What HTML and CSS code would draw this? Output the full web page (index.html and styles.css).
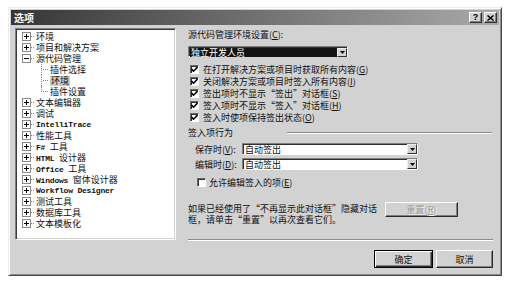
FILE: index.html
```html
<!DOCTYPE html>
<html lang="zh">
<head>
<meta charset="utf-8">
<title>选项</title>
<link rel="stylesheet" href="styles.css">
</head>
<body>
<div class="window">
  <div class="titlebar">
    <span class="title">选项</span>
    <div class="tbtns">
      <span class="tbtn">?</span>
      <span class="tbtn"><svg width="7" height="6" viewBox="0 0 7 6"><path d="M0.5 0.5L6.5 5.5M6.5 0.5L0.5 5.5" stroke="#000" stroke-width="1.5"/></svg></span>
    </div>
  </div>
  <div class="main">
    <div class="tree">
      <div class="node"><i class="exp plus"></i><b class="dash"></b><span class="t">环境</span></div>
      <div class="node"><i class="exp plus"></i><b class="dash"></b><span class="t">项目和解决方案</span></div>
      <div class="node"><i class="exp"></i><b class="dash"></b><span class="t">源代码管理</span></div>
      <div class="node child"><b class="conn"></b><span class="t">插件选择</span></div>
      <div class="node child"><b class="conn"></b><span class="t sel">环境</span></div>
      <div class="node child"><b class="conn last"></b><span class="t">插件设置</span></div>
      <div class="node"><i class="exp plus"></i><b class="dash"></b><span class="t">文本编辑器</span></div>
      <div class="node"><i class="exp plus"></i><b class="dash"></b><span class="t">调试</span></div>
      <div class="node"><i class="exp plus"></i><b class="dash"></b><span class="t lat">IntelliTrace</span></div>
      <div class="node"><i class="exp plus"></i><b class="dash"></b><span class="t">性能工具</span></div>
      <div class="node"><i class="exp plus"></i><b class="dash"></b><span class="t"><span class="lat">F# </span>工具</span></div>
      <div class="node"><i class="exp plus"></i><b class="dash"></b><span class="t"><span class="lat">HTML </span>设计器</span></div>
      <div class="node"><i class="exp plus"></i><b class="dash"></b><span class="t"><span class="lat">Office </span>工具</span></div>
      <div class="node"><i class="exp plus"></i><b class="dash"></b><span class="t"><span class="lat">Windows </span>窗体设计器</span></div>
      <div class="node"><i class="exp plus"></i><b class="dash"></b><span class="t lat">Workflow Designer</span></div>
      <div class="node"><i class="exp plus"></i><b class="dash"></b><span class="t">测试工具</span></div>
      <div class="node"><i class="exp plus"></i><b class="dash"></b><span class="t">数据库工具</span></div>
      <div class="node"><i class="exp plus"></i><b class="dash"></b><span class="t">文本模板化</span></div>
    </div>

    <div class="pane">
      <div class="label">源代码管理环境设置(<u>C</u>):</div>
      <div class="combo wide">
        <div class="field selected"><span class="ft">独立开发人员</span></div>
        <div class="arrow"><svg width="5" height="3" viewBox="0 0 5 3"><path d="M0 0H5L2.5 3Z" fill="#000"/></svg></div>
      </div>
      <div class="checks">
        <div class="chk"><span class="box"><svg width="7" height="7" viewBox="0 0 7 7"><path d="M0.5 3L2.5 5.2L6.5 1" stroke="#000" stroke-width="1.6" fill="none"/></svg></span><span class="ct">在打开解决方案或项目时获取所有内容(<u>G</u>)</span></div>
        <div class="chk"><span class="box"><svg width="7" height="7" viewBox="0 0 7 7"><path d="M0.5 3L2.5 5.2L6.5 1" stroke="#000" stroke-width="1.6" fill="none"/></svg></span><span class="ct">关闭解决方案或项目时签入所有内容(<u>I</u>)</span></div>
        <div class="chk"><span class="box"><svg width="7" height="7" viewBox="0 0 7 7"><path d="M0.5 3L2.5 5.2L6.5 1" stroke="#000" stroke-width="1.6" fill="none"/></svg></span><span class="ct">签出项时不显示“签出”对话框(<u>S</u>)</span></div>
        <div class="chk"><span class="box"><svg width="7" height="7" viewBox="0 0 7 7"><path d="M0.5 3L2.5 5.2L6.5 1" stroke="#000" stroke-width="1.6" fill="none"/></svg></span><span class="ct">签入项时不显示“签入”对话框(<u>H</u>)</span></div>
        <div class="chk"><span class="box"><svg width="7" height="7" viewBox="0 0 7 7"><path d="M0.5 3L2.5 5.2L6.5 1" stroke="#000" stroke-width="1.6" fill="none"/></svg></span><span class="ct">签入时使项保持签出状态(<u>O</u>)</span></div>
      </div>
      <div class="group">
        <span class="ct">签入项行为</span>
        <span class="gline"></span>
      </div>
      <div class="frow first">
        <span class="flabel">保存时(<u>V</u>):</span>
        <div class="combo mid">
          <div class="field"><span class="ft">自动签出</span></div>
          <div class="arrow"><svg width="5" height="3" viewBox="0 0 5 3"><path d="M0 0H5L2.5 3Z" fill="#000"/></svg></div>
        </div>
      </div>
      <div class="frow">
        <span class="flabel">编辑时(<u>D</u>):</span>
        <div class="combo mid">
          <div class="field"><span class="ft">自动签出</span></div>
          <div class="arrow"><svg width="5" height="3" viewBox="0 0 5 3"><path d="M0 0H5L2.5 3Z" fill="#000"/></svg></div>
        </div>
      </div>
      <div class="chk allow"><span class="box"></span><span class="ct">允许编辑签入的项(<u>E</u>)</span></div>
      <div class="reset-row">
        <p class="note">如果已经使用了“不再显示此对话框”隐藏对话框，请单击“重置”以再次查看它们。</p>
        <span class="btn disabled">重置(<u>R</u>)</span>
      </div>
      <div class="sep"></div>
      <div class="actions">
        <span class="btn default">确定</span>
        <span class="btn cancel">取消</span>
      </div>
    </div>
  </div>
</div>
</body>
</html>
```

FILE: styles.css
```css
* { box-sizing: border-box; }

body {
  margin: 0;
  background: #fff;
  font-family: "Noto Sans CJK SC", "Noto Sans", sans-serif;
  font-size: 9px;
  color: #111;
}

.window {
  margin: 7px 0 0 8px;
  width: 494px;
  height: 269px;
  background: #d2d2d2;
  border: 1px solid;
  border-color: #ececec #4a4a4a #4a4a4a #ececec;
  box-shadow: inset 1px 1px #fff, inset -1px -1px #8a8a8a;
  padding: 2px;
}

.titlebar {
  height: 15px;
  background: linear-gradient(to right, #363636, #5a5a5a 30%, #a9a9a9);
  display: flex;
  align-items: center;
  justify-content: space-between;
  padding: 0 2px 0 3px;
}

.title {
  color: #fff;
  font-weight: bold;
  font-size: 10px;
  line-height: 12px;
  height: 12px;
}

.tbtns { display: flex; gap: 2px; }

.tbtn {
  width: 13px;
  height: 11px;
  background: #d2d2d2;
  border: 1px solid;
  border-color: #fff #303030 #303030 #fff;
  box-shadow: inset -1px -1px #808080;
  display: flex;
  align-items: center;
  justify-content: center;
  font-family: "Liberation Sans", sans-serif;
  font-weight: bold;
  font-size: 9px;
  line-height: 9px;
  color: #000;
}

.main {
  display: flex;
  padding: 3px 0 0 4px;
}

.tree {
  width: 161px;
  height: 212px;
  background: #fff;
  border: 1px solid;
  border-color: #808080 #fff #fff #808080;
  box-shadow: inset 1px 1px #3a3a3a, inset -1px -1px #d2d2d2;
  padding: 2px 0 0 0;
}

.node {
  height: 11px;
  display: flex;
  align-items: center;
  padding-left: 6px;
  white-space: nowrap;
}

.t {
  display: inline-block;
  height: 10px;
  line-height: 10px;
}

.exp {
  width: 9px;
  height: 9px;
  border: 1px solid #8a8a8a;
  background: #fff;
  position: relative;
  flex: none;
}
.exp::before {
  content: "";
  position: absolute;
  left: 1px;
  top: 3px;
  width: 5px;
  height: 1px;
  background: #000;
}
.exp.plus::after {
  content: "";
  position: absolute;
  left: 3px;
  top: 1px;
  width: 1px;
  height: 5px;
  background: #000;
}

.dash {
  width: 4px;
  height: 1px;
  margin-right: 1px;
  background: repeating-linear-gradient(to right, #888 0 1px, transparent 1px 2px);
  flex: none;
}

.child { padding-left: 25px; }

.conn {
  width: 8px;
  height: 11px;
  align-self: flex-start;
  border-left: 1px dotted #8a8a8a;
  background: repeating-linear-gradient(to right, #888 0 1px, transparent 1px 2px) no-repeat 1px 5px / 6px 1px;
  margin-right: 1px;
  flex: none;
}
.conn.last { height: 6px; }

.sel { background: #c9c9c9; padding: 0 1px; }

.lat {
  font-family: "Liberation Mono", monospace;
  font-weight: bold;
  font-size: 8px;
  letter-spacing: -0.2px;
}

.pane {
  margin-left: 12px;
  width: 308px;
  display: flex;
  flex-direction: column;
}

.label {
  margin-top: 1px;
  height: 11px;
  line-height: 11px;
}

.combo {
  display: flex;
  height: 11px;
  border: 1px solid;
  border-color: #808080 #fff #fff #808080;
  box-shadow: inset 1px 1px #303030;
  background: #fff;
  padding: 1px 0 0 1px;
}
.combo.wide { margin-top: 6px; width: 160px; }
.combo.mid { width: 176px; height: 12px; }

.field {
  flex: 1;
  height: 9px;
  padding-left: 1px;
  white-space: nowrap;
  display: flex;
  align-items: center;
}
.ft {
  display: inline-block;
  height: 9px;
  line-height: 9px;
}
.field.selected { background: #141414; color: #fff; }

.arrow {
  width: 10px;
  height: 9px;
  background: #d2d2d2;
  border: 1px solid;
  border-color: #eee #303030 #303030 #eee;
  display: flex;
  align-items: center;
  justify-content: center;
  flex: none;
}
.combo.mid .arrow { height: 10px; margin-top: -1px; }
.combo.mid .field { height: 10px; margin-top: -1px; }

.checks { margin-top: 6px; display: flex; flex-direction: column; }

.chk {
  display: flex;
  align-items: center;
  height: 12px;
  padding-left: 2px;
  gap: 4px;
  white-space: nowrap;
}

.ct {
  display: inline-block;
  height: 11px;
  line-height: 11px;
}

.box {
  width: 9px;
  height: 9px;
  background: #fff;
  border: 1px solid;
  border-color: #6a6a6a #fff #fff #6a6a6a;
  box-shadow: inset 1px 1px #303030;
  display: flex;
  align-items: center;
  justify-content: center;
  flex: none;
}

.group {
  margin-top: 4px;
  height: 11px;
  display: flex;
  align-items: center;
}
.gline {
  flex: 1;
  margin-left: 54px;
  margin-right: 4px;
  height: 2px;
  border-top: 1px solid #8a8a8a;
  border-bottom: 1px solid #fff;
}

.frow {
  display: flex;
  align-items: center;
  margin-top: 3px;
  padding-left: 7px;
}
.frow.first { margin-top: 5px; }
.flabel { width: 47px; white-space: nowrap; height: 11px; line-height: 11px; }

.chk.allow { margin-top: 6px; padding-left: 9px; gap: 3px; }

.reset-row {
  display: flex;
  align-items: flex-start;
  margin-top: 15px;
  gap: 7px;
}
.note {
  margin: 0;
  width: 190px;
  line-height: 11px;
}

.btn {
  display: flex;
  align-items: center;
  justify-content: center;
  background: #d2d2d2;
  border: 1px solid;
  border-color: #fff #2a2a2a #2a2a2a #fff;
  box-shadow: inset -1px -1px #808080;
  color: #111;
  white-space: nowrap;
  line-height: 11px;
}
.btn.disabled {
  width: 73px;
  height: 15px;
  color: #9a9a9a;
  text-shadow: 1px 1px #f4f4f4;
  margin-top: -1px;
}

.sep {
  margin-top: 14px;
  margin-right: 3px;
  height: 2px;
  border-top: 1px solid #8a8a8a;
  border-bottom: 1px solid #fff;
}

.actions {
  display: flex;
  justify-content: flex-end;
  gap: 3px;
  margin-top: 9px;
  padding-right: 3px;
}
.btn.default {
  width: 59px;
  height: 18px;
  border: 1px solid #000;
  box-shadow: inset 1px 1px #fff, inset -1px -1px #303030, inset -2px -2px #808080;
}
.btn.cancel { width: 57px; height: 18px; }
```
